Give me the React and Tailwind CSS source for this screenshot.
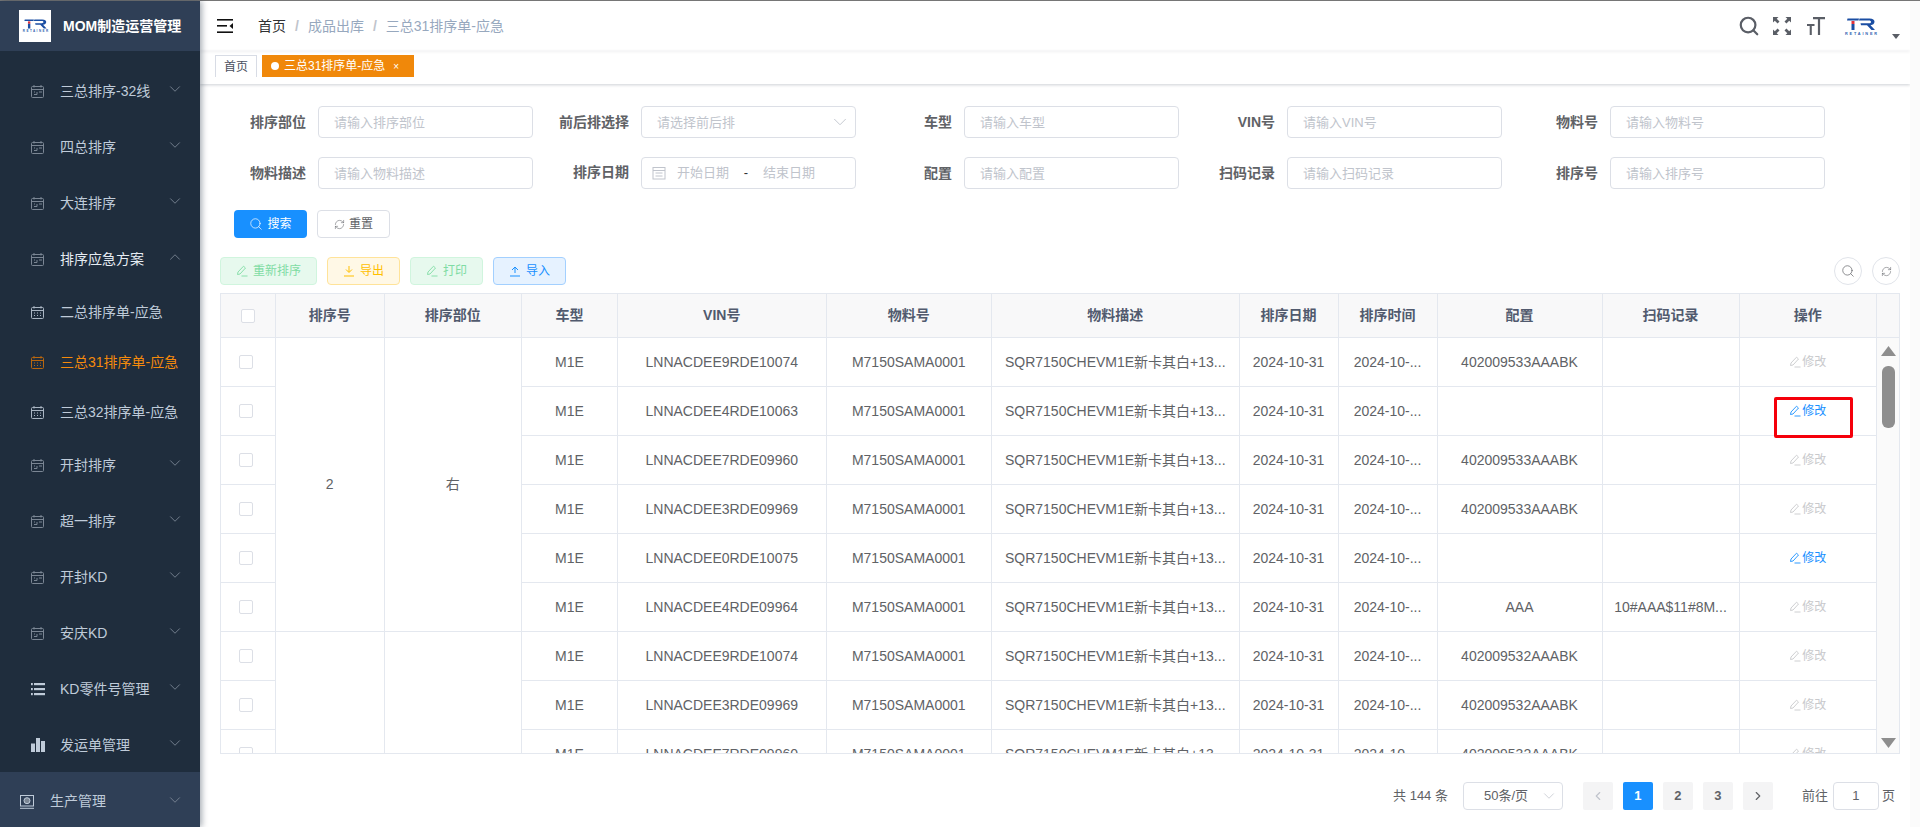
import React from 'react';
import { Search, RefreshCw, ChevronDown, ChevronUp, ChevronLeft, ChevronRight } from 'lucide-react';

const menus = [
  { label: '三总排序-32线', icon: 'cal' },
  { label: '四总排序', icon: 'cal' },
  { label: '大连排序', icon: 'cal' },
  { label: '排序应急方案', icon: 'cal', open: true },
  { label: '二总排序单-应急', icon: 'sub', sub: true },
  { label: '三总31排序单-应急', icon: 'sub', sub: true, active: true },
  { label: '三总32排序单-应急', icon: 'sub', sub: true },
  { label: '开封排序', icon: 'cal' },
  { label: '超一排序', icon: 'cal' },
  { label: '开封KD', icon: 'cal' },
  { label: '安庆KD', icon: 'cal' },
  { label: 'KD零件号管理', icon: 'list' },
  { label: '发运单管理', icon: 'bars' },
];

const filters = [
  { label: '排序部位', ph: '请输入排序部位' },
  { label: '前后排选择', ph: '请选择前后排', select: true },
  { label: '车型', ph: '请输入车型' },
  { label: 'VIN号', ph: '请输入VIN号' },
  { label: '物料号', ph: '请输入物料号' },
  { label: '物料描述', ph: '请输入物料描述' },
  { label: '排序日期', date: true },
  { label: '配置', ph: '请输入配置' },
  { label: '扫码记录', ph: '请输入扫码记录' },
  { label: '排序号', ph: '请输入排序号' },
];

const colWidths = [55, 108.5, 137.5, 96, 208.5, 165.5, 247.5, 99, 99, 165, 137, 137.5];
const headers = ['排序号', '排序部位', '车型', 'VIN号', '物料号', '物料描述', '排序日期', '排序时间', '配置', '扫码记录', '操作'];

const rows = [
  { vin: 'LNNACDEE9RDE10074', conf: '402009533AAABK' },
  { vin: 'LNNACDEE4RDE10063', conf: '', on: true },
  { vin: 'LNNACDEE7RDE09960', conf: '402009533AAABK' },
  { vin: 'LNNACDEE3RDE09969', conf: '402009533AAABK' },
  { vin: 'LNNACDEE0RDE10075', conf: '', on: true },
  { vin: 'LNNACDEE4RDE09964', conf: 'AAA', scan: '10#AAA$11#8M...' },
  { vin: 'LNNACDEE9RDE10074', conf: '402009532AAABK' },
  { vin: 'LNNACDEE3RDE09969', conf: '402009532AAABK' },
  { vin: 'LNNACDEE7RDE09960', conf: '402009532AAABK' },
];

const Logo = ({ className }) => (
  <svg viewBox="0 0 34 17" className={className}>
    <path d="M3.500 0.500h11.500l-0.500 2H3z" fill="#1b4ea3" />
    <rect x="7.500" y="3" width="3" height="3" fill="#e0323c" />
    <rect x="7.500" y="6" width="3" height="6" fill="#1b4ea3" />
    <path d="M15.500 0.500h10c3.500 0 5 1.500 5 3.300 0 2-1.700 3.200-4 3.400l4.500 4.800h-3.500l-4.500-4.800h-6l-.5-2h8.500c1.300 0 2-.5 2-1.300s-.7-1.400-2-1.400H15z" fill="#1b4ea3" />
    <text x="1" y="16.500" fontFamily="Liberation Sans" fontWeight="700" fontSize="3.800" textLength="32" fill="#2f5fb0">RETAINER</text>
  </svg>
);

const MenuIcon = ({ type, active }) => {
  if (type === 'list') {
    return (
      <svg width="14" height="14" viewBox="0 0 14 14" fill="#bfcbd9">
        <rect x="0" y="1" width="1.800" height="2.200" />
        <rect x="3" y="1" width="11" height="2.200" />
        <rect x="0" y="6" width="1.800" height="2.200" />
        <rect x="3" y="6" width="11" height="2.200" />
        <rect x="0" y="11" width="1.800" height="2.200" />
        <rect x="3" y="11" width="11" height="2.200" />
      </svg>
    );
  }
  if (type === 'bars') {
    return (
      <svg width="14" height="14" viewBox="0 0 14 14" fill="#bfcbd9">
        <rect x="0" y="5.500" width="4" height="8.500" />
        <rect x="5" y="0" width="4" height="14" />
        <rect x="10" y="3" width="4" height="11" />
      </svg>
    );
  }
  const color = active ? '#b8670f' : type === 'sub' ? '#a9b5c3' : '#7b8694';
  return (
    <svg width="13" height="13" viewBox="0 0 13 13" fill="none" stroke={color} strokeWidth="1">
      <rect x="0.500" y="1.500" width="12" height="11" rx="1" />
      <path d="M3 0v2.500M10 0v2.500M0.500 4.500h12" />
      {type === 'sub' ? (
        <path d="M3 7h1M6 7h1M9 7h1M3 9.500h1M6 9.500h1M9 9.500h1" />
      ) : (
        <path d="M3 9.500h3V7M8 7h3M3 7h1" />
      )}
    </svg>
  );
};

const EditIcon = ({ className }) => (
  <svg viewBox="0 0 12 12" fill="none" stroke="currentColor" strokeWidth="0.900" className={className}>
    <path d="M1.500 9.500 2 7 7.500 1.200l2 1.800L4 9z" />
    <path d="M5.500 11h6" />
  </svg>
);

const ArrowIcon = ({ up, className }) => (
  <svg viewBox="0 0 12 12" fill="none" stroke="currentColor" strokeWidth="1" className={className}>
    {up ? <path d="M6 8V2M3 5l3-3 3 3M1 11h10" /> : <path d="M6 1v6M3 4.500 6 7.500l3-3M1 11h10" />}
  </svg>
);

const Field = ({ item }) => (
  <div className={`flex items-center gap-3 ${item.date ? '-mt-px' : ''}`}>
    <label className="w-[72px] shrink-0 text-right text-[14px] font-bold text-[#606266] whitespace-nowrap">{item.label}</label>
    {item.date ? (
      <div className="flex h-8 w-[214.5px] items-center rounded border border-[#dcdfe6] bg-white pl-[10px] text-[13px] text-[#c0c4cc]">
        <svg width="14" height="14" viewBox="0 0 14 14" fill="none" stroke="#c0c4cc" strokeWidth="1">
          <rect x="1" y="1.500" width="12" height="11.500" />
          <path d="M1 4.500h12M3.500 7h7M3.500 10h7" />
        </svg>
        <span className="ml-[11px] w-[52px]">开始日期</span>
        <span className="w-[34px] text-center text-[#303133]">-</span>
        <span>结束日期</span>
      </div>
    ) : (
      <div className="relative w-[214.5px]">
        <input
          placeholder={item.ph}
          className="h-8 w-full rounded border border-[#dcdfe6] bg-white pl-[15px] text-[13px] outline-none placeholder:text-[#c0c4cc]"
        />
        {item.select && <ChevronDown size={22} strokeWidth={1} className="absolute right-[5px] top-[5px] text-[#c0c4cc]" />}
      </div>
    )}
  </div>
);

const ActionButton = ({ icon, label, className }) => (
  <button className={`flex h-7 items-center justify-center gap-[5px] rounded border text-[12px] ${className}`}>
    {icon}
    {label}
  </button>
);

const Colgroup = () => (
  <colgroup>
    {colWidths.map((w, i) => (
      <col key={i} style={{ width: w }} />
    ))}
  </colgroup>
);

const Checkbox = ({ className }) => <span className={`block h-[14px] w-[14px] rounded-[2px] border border-[#dcdfe6] bg-white ${className || ''}`} />;

const td = 'h-[49px] border-r border-b border-[#e4e8ef] text-center text-[14px] text-[#606266] whitespace-nowrap';

const Pager = ({ active, children }) => (
  <button className={`flex h-7 w-[30px] items-center justify-center rounded-[2px] text-[13px] font-bold ${active ? 'bg-[#1890ff] text-white' : 'bg-[#f4f4f5] text-[#606266]'}`}>
    {children}
  </button>
);

const App = () => {
  return (
    <div className="flex h-screen w-full flex-col overflow-hidden bg-white font-['Liberation_Sans','Noto_Sans_CJK_SC',sans-serif]">
      <div className="h-px shrink-0 bg-[#777]" />
      <div className="flex min-h-0 flex-1">
        {/* Sidebar */}
        <aside className="relative z-10 flex w-[200px] shrink-0 flex-col bg-[#1f2d3d] shadow-[2px_0_6px_rgba(0,21,41,0.35)]">
          <div className="flex h-[50px] shrink-0 items-center bg-[#2f3f56] pl-[19px]">
            <div className="flex h-8 w-8 items-center justify-center bg-white">
              <Logo className="w-[27px]" />
            </div>
            <span className="ml-3 text-[14px] font-bold text-white whitespace-nowrap">MOM制造运营管理</span>
          </div>
          <nav className="mt-[12px] flex flex-col">
            {menus.map((m) => (
              <div key={m.label} className={`flex shrink-0 items-center pl-[31px] ${m.sub ? 'h-[50px]' : 'h-[56px]'}`}>
                <span className="flex w-[29px] shrink-0">
                  <MenuIcon type={m.icon} active={m.active} />
                </span>
                <span className={`text-[14px] whitespace-nowrap ${m.active ? 'text-[#f58a0c]' : m.open ? 'text-[#e6ecf3]' : 'text-[#bfcbd9]'}`}>{m.label}</span>
                {!m.sub && (
                  <span className="ml-auto mr-[16px] -mt-1 text-[#7b8694]">
                    {m.open ? <ChevronUp size={18} strokeWidth={1.2} /> : <ChevronDown size={18} strokeWidth={1.2} />}
                  </span>
                )}
              </div>
            ))}
          </nav>
          <div className="mt-[-1px] flex flex-1 items-center bg-[#2f3f56] pl-[20px] pt-[4px]">
            <svg width="14" height="14" viewBox="0 0 14 14" fill="none" stroke="#bfcbd9" strokeWidth="1">
              <rect x="0.500" y="0.500" width="13" height="10.500" />
              <circle cx="7" cy="5.700" r="3" fill="#7b8694" />
              <path d="M0 13.300h14" />
            </svg>
            <span className="ml-[16px] text-[14px] text-[#bfcbd9]">生产管理</span>
            <ChevronDown size={18} strokeWidth={1.2} className="ml-auto mr-[16px] -mt-1 text-[#7b8694]" />
          </div>
        </aside>

        {/* Main */}
        <main className="flex min-w-0 flex-1 flex-col">
          <header className="flex h-[50px] shrink-0 items-center pl-[17px] shadow-[0_1px_3px_rgba(0,21,41,0.06)]">
            <svg width="16" height="14" viewBox="0 0 16 14" fill="#111">
              <rect x="0" y="0" width="16" height="1.600" />
              <rect x="0" y="6" width="10" height="1.600" />
              <path d="M16 4v6l-3.500-3z" />
              <rect x="0" y="12.400" width="16" height="1.600" />
            </svg>
            <div className="ml-[25px] flex items-center text-[14px] text-[#97a8be]">
              <span className="text-[#303133]">首页</span>
              <span className="mx-[9px] font-bold text-[#c0c4cc]">/</span>
              <span>成品出库</span>
              <span className="mx-[9px] font-bold text-[#c0c4cc]">/</span>
              <span>三总31排序单-应急</span>
            </div>
            <div className="ml-auto flex items-center pr-[10px] text-[#5a5e66]">
              <Search size={22} strokeWidth={2.4} />
              <svg width="18" height="18" viewBox="0 0 18 18" fill="#5a5e66" className="ml-[13px]">
                <path d="M0 0h5.500L3.700 1.800 6.500 4.600 4.600 6.500 1.800 3.700 0 5.500zM18 0v5.500l-1.800-1.800-2.800 2.800-1.900-1.900 2.800-2.800L12.500 0zM0 18v-5.500l1.800 1.800 2.800-2.800 1.900 1.900-2.800 2.800L5.500 18zM18 18h-5.500l1.800-1.800-2.800-2.800 1.900-1.900 2.800 2.800 1.800-1.800z" />
              </svg>
              <svg width="18" height="18" viewBox="0 0 18 18" fill="#5a5e66" className="ml-[16px]">
                <path d="M6 0h12v2.200h-4.900V18h-2.200V2.200H6zM0 7h7.500v2H4.800v9H2.700V9H0z" />
              </svg>
              <Logo className="ml-[19px] w-[34px]" />
              <svg width="8" height="5" viewBox="0 0 8 5" fill="#5a5e66" className="ml-[14px] mt-[20px]">
                <path d="M0 0h8L4 5z" />
              </svg>
            </div>
          </header>

          <div className="flex h-[33px] shrink-0 items-start gap-[5px] pl-[15px] pt-[4px] shadow-[0_1px_3px_rgba(0,21,41,0.2)]">
            <span className="flex h-[22px] w-[42px] items-center justify-center border border-b-0 border-[#d8dce5] text-[12px] text-[#495060]">首页</span>
            <span className="flex h-[22px] w-[152px] items-center bg-[#f0880a] pl-[9px] text-[12px] text-white">
              <span className="h-2 w-2 rounded-full bg-white" />
              <span className="ml-[5px]">三总31排序单-应急</span>
              <span className="ml-[8px] text-[10px]">×</span>
            </span>
          </div>

          <div className="flex min-h-0 flex-1 flex-col pl-[20px] pr-[10px]">
            {/* Filters */}
            <div className="mt-[22px] grid grid-cols-[repeat(5,298.5px)] gap-x-[24.500px] gap-y-[19px] pl-[14px]">
              {filters.map((f) => (
                <Field key={f.label} item={f} />
              ))}
            </div>

            <div className="mt-[21px] flex gap-[10px] pl-[14px]">
              <button className="flex h-7 w-[73px] items-center justify-center gap-1 rounded bg-[#1890ff] text-[12px] text-white">
                <Search size={14} strokeWidth={1.2} />
                搜索
              </button>
              <button className="flex h-7 w-[73px] items-center justify-center gap-1 rounded border border-[#dcdfe6] bg-white text-[12px] text-[#606266]">
                <RefreshCw size={11} strokeWidth={1.2} />
                重置
              </button>
            </div>

            <div className="mt-[19px] flex items-center gap-[10px]">
              <ActionButton icon={<EditIcon className="h-3 w-3" />} label="重新排序" className="w-[97px] border-[#d0f5de] bg-[#e7f9ee] text-[#7fdca4]" />
              <ActionButton icon={<ArrowIcon className="h-3 w-3" />} label="导出" className="w-[73px] border-[#ffe399] bg-[#fff8e6] text-[#ffbf00]" />
              <ActionButton icon={<EditIcon className="h-3 w-3" />} label="打印" className="w-[73px] border-[#d0f5de] bg-[#e7f9ee] text-[#7fdca4]" />
              <ActionButton icon={<ArrowIcon up className="h-3 w-3" />} label="导入" className="w-[73px] border-[#a3d0ff] bg-[#e6f2ff] text-[#1890ff]" />
              <button className="ml-auto flex h-7 w-7 items-center justify-center rounded-full border border-[#e1e4ea] text-[#606266]">
                <Search size={14} strokeWidth={1.2} />
              </button>
              <button className="flex h-7 w-7 items-center justify-center rounded-full border border-[#e1e4ea] text-[#606266]">
                <RefreshCw size={11} strokeWidth={1.2} />
              </button>
            </div>

            {/* Table */}
            <div className="relative mt-[8px] w-[1680px] border-t border-l border-b border-[#e4e8ef]">
              <div className="flex h-[44px]">
                <table className="w-[1656px] table-fixed border-separate border-spacing-0">
                  <Colgroup />
                  <thead>
                    <tr className="bg-[#f8f8f9]">
                      <th className="h-[44px] border-r border-b border-[#e4e8ef]">
                        <Checkbox className="mx-auto" />
                      </th>
                      {headers.map((h) => (
                        <th key={h} className="h-[44px] border-r border-b border-[#e4e8ef] text-center text-[14px] font-bold text-[#515a6e]">{h}</th>
                      ))}
                    </tr>
                  </thead>
                </table>
                <div className="flex-1 border-r border-b border-[#e4e8ef] bg-[#f8f8f9]" />
              </div>
              <div className="flex h-[415px]">
                <div className="w-[1656px] shrink-0 overflow-hidden">
                  <table className="w-[1656px] table-fixed border-separate border-spacing-0">
                    <Colgroup />
                    <tbody>
                      {rows.map((r, i) => (
                        <tr key={i}>
                          <td className={td}>
                            <Checkbox className="mx-auto -translate-x-[2px]" />
                          </td>
                          {i === 0 && <td rowSpan={6} className={td}>2</td>}
                          {i === 0 && <td rowSpan={6} className={td}>右</td>}
                          {i === 6 && <td rowSpan={3} className={td} />}
                          {i === 6 && <td rowSpan={3} className={td} />}
                          <td className={td}>M1E</td>
                          <td className={td}>{r.vin}</td>
                          <td className={td}>M7150SAMA0001</td>
                          <td className={td}>SQR7150CHEVM1E新卡其白+13...</td>
                          <td className={td}>2024-10-31</td>
                          <td className={td}>2024-10-...</td>
                          <td className={td}>{r.conf}</td>
                          <td className={td}>{r.scan}</td>
                          <td className={td}>
                            <span className={`flex items-center justify-center gap-px text-[12px] ${r.on ? 'text-[#1890ff]' : 'text-[#c8c9cc]'}`}>
                              <EditIcon className="h-3 w-3" />
                              修改
                            </span>
                          </td>
                        </tr>
                      ))}
                    </tbody>
                  </table>
                </div>
                <div className="flex flex-1 flex-col items-center border-r border-[#e4e8ef] bg-[#fafafa] pt-[8px] pb-[5px]">
                  <svg width="15" height="10" viewBox="0 0 15 10" fill="#8e8e8e">
                    <path d="M7.500 0 15 10H0z" />
                  </svg>
                  <div className="mt-[10px] h-[62px] w-[13px] rounded-[6px] bg-[#8e8e8e]" />
                  <svg width="15" height="10" viewBox="0 0 15 10" fill="#8e8e8e" className="mt-auto">
                    <path d="M0 0h15L7.500 10z" />
                  </svg>
                </div>
              </div>
              <div className="absolute left-[1553px] top-[103px] h-[41px] w-[79px] rounded-[2px] border-[3px] border-[#f5000a]" />
            </div>

            {/* Pagination */}
            <div className="mt-[28px] flex h-7 items-center justify-end pr-[5px] text-[13px] text-[#606266]">
              <span>共 144 条</span>
              <div className="ml-[15px] flex h-7 w-[100px] items-center rounded border border-[#dcdfe6] pl-5">
                <span>50条/页</span>
                <ChevronDown size={18} strokeWidth={1} className="ml-auto mr-[4px] text-[#c0c4cc]" />
              </div>
              <div className="ml-[20px] flex gap-[10px]">
                <Pager><ChevronLeft size={14} strokeWidth={2} className="text-[#c0c4cc]" /></Pager>
                <Pager active>1</Pager>
                <Pager>2</Pager>
                <Pager>3</Pager>
                <Pager><ChevronRight size={14} strokeWidth={2} /></Pager>
              </div>
              <span className="ml-[29px]">前往</span>
              <span className="ml-[5px] flex h-7 w-[46px] items-center justify-center rounded border border-[#dcdfe6]">1</span>
              <span className="ml-[3px]">页</span>
            </div>
          </div>
        </main>
        <div className="w-[10px] shrink-0 bg-[#fbfbfb]" />
      </div>
    </div>
  );
};

export default App;
